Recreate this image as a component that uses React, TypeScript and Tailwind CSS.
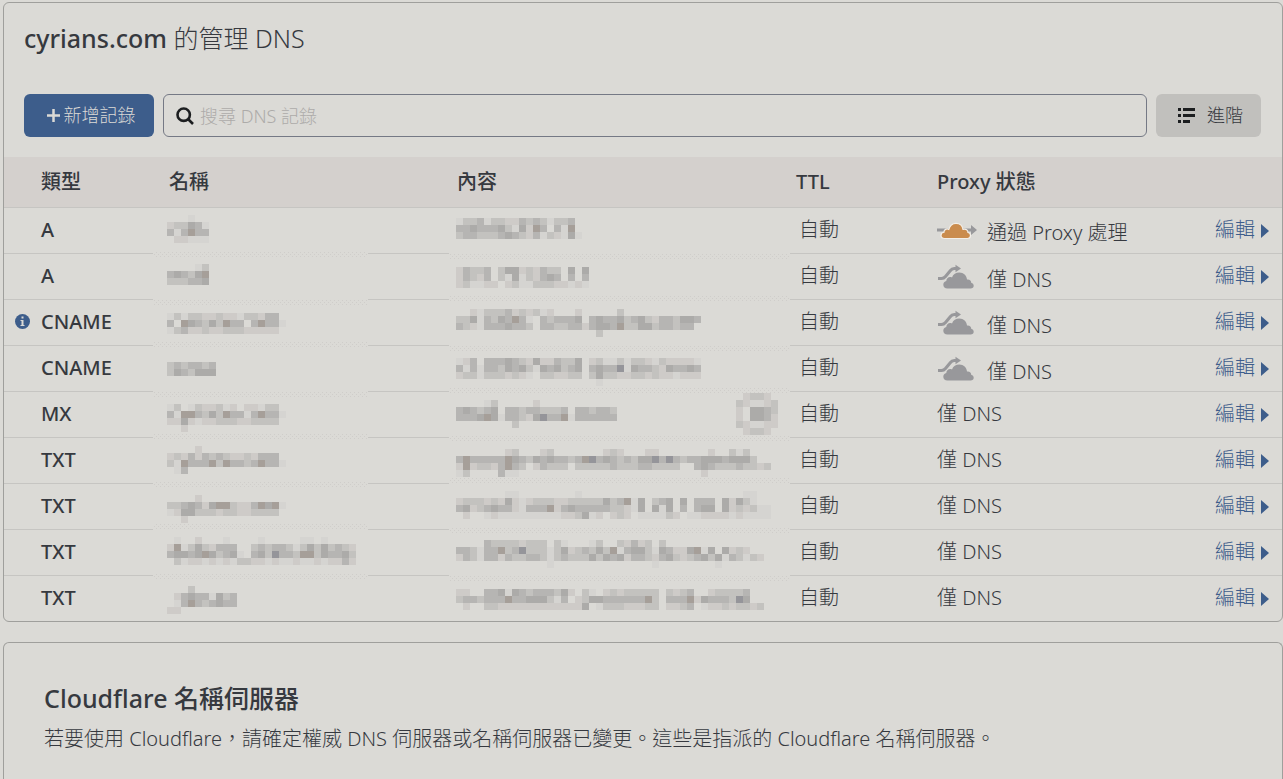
type MosaicData = { y: number; lines: string[] };

type DnsRecord = {
  type: string;
  info?: boolean;
  name: MosaicData;
  content: MosaicData;
  badge?: MosaicData;
  proxy: "on" | "off" | "none";
};

// One digit per 7px block, from the faintest shade to the darkest
const SHADES: Record<string, string> = {
  "1": "#d5d4d1",
  "2": "#cecbc8",
  "3": "#c3c2bf",
  "4": "#b6b5b3",
  "5": "#acaba9",
  "6": "#a69f99",
  "7": "#95959a",
};
const CELL = 7;

const RECORDS: DnsRecord[] = [
  {
    type: "A",
    name: { y: 7, lines: ["...1..", "233541", "414644", ".22111"] },
    content: { y: 10, lines: ["13341332243431334", "4454445315264.416", "344333454324132151"] },
    proxy: "on",
  },
  {
    type: "A",
    name: { y: 10, lines: ["....13", "454356", "333445"] },
    content: { y: 13, lines: ["24334.355232433.5.5", "24324.315132454.4.4", "231122.231133322121"] },
    proxy: "off",
  },
  {
    type: "CNAME",
    info: true,
    name: { y: 13, lines: ["1313322322133244", "4.654353644.46441", "1342232233322222"] },
    content: {
      y: 9,
      lines: [
        "..213334232312...2.....3",
        "33514354641.434445.4544534532443554",
        "43214445443.4433442455463355344344",
        "....................3",
      ],
    },
    proxy: "off",
  },
  {
    type: "CNAME",
    name: { y: 16, lines: ["3434434", "3543555"] },
    content: {
      y: 12,
      lines: [
        "124.44454325224335.2311313321322221",
        "414144354531545345.4544715443254454",
        "23313332321.332233.3533223323221222",
        "....................1",
      ],
    },
    proxy: "off",
  },
  {
    type: "MX",
    name: { y: 12, lines: ["13.1322312.22133", "41664353644146441", "2252122333223333", "..2"] },
    content: {
      y: 8,
      lines: ["....13.....2", "454345.443443334.443443", "44456514432574461444444", "........3"],
    },
    badge: { y: 1, lines: [".2332.", "321123", "2.5543", "2.5542", "321122", ".2332."] },
    proxy: "none",
  },
  {
    type: "TXT",
    name: { y: 8, lines: ["....2", "2324243432232444", "31644463644346441", ".14"] },
    content: {
      y: 11,
      lines: [
        ".......23...23.......232...22.......2..313",
        "4644444654354544346745434355747434455545553",
        "2623324643.24333.333334333443333..45433343323",
        "13....411..........................2",
      ],
    },
    proxy: "none",
  },
  {
    type: "TXT",
    name: { y: 11, lines: ["....2", "33454256632246561", "1255333233223333", "..2"] },
    content: {
      y: 7,
      lines: [
        ".......11........1.......................11",
        "233323252123332233333534615.345.5.444.52531",
        "452345442144462454444433215.515.4.455.5232311",
        ".2..12111111111223512.232.111132.112222121111",
      ],
    },
    proxy: "none",
  },
  {
    type: "TXT",
    name: {
      y: 7,
      lines: [
        ".1..2...1....1.....11.1",
        "2613532444..343443135353432",
        "45545653451.453744366354453",
        ".31221212133221211211212242",
      ],
    },
    content: {
      y: 10,
      lines: [
        "....433332333.31...13..32423.3",
        "4431446347333135234353614553154225615.5232",
        "24314424334431343335354524432453234535143132",
        ".............1..............1........1",
      ],
    },
    proxy: "none",
  },
  {
    type: "TXT",
    name: { y: 10, lines: ["...3", ".245441534", ".146434544", "22"] },
    content: {
      y: 13,
      lines: [
        "22..4451543444352.31.23233333.3234..233334",
        "3443444644555314.235544444463.444625444375",
        ".2..332222222222225.133322233.2234.122323323",
      ],
    },
    proxy: "none",
  },
];

function Mosaic({ data, x = 0 }: { data: MosaicData; x?: number }) {
  return (
    <>
      {data.lines.map((line, row) =>
        line.split("").map((c, col) =>
          SHADES[c] ? (
            <rect
              key={`${row}-${col}`}
              x={x + col * CELL}
              y={data.y + row * CELL}
              width={CELL}
              height={CELL}
              fill={SHADES[c]}
            />
          ) : null
        )
      )}
    </>
  );
}

// Speckled strip that replaces the row line under a masked value
function Speckle({ y, x, width }: { y: number; x: number; width: number }) {
  const top = y + CELL * Math.floor((45 - y) / CELL);
  return <rect x={x} y={top + 1} width={width} height={6} fill="url(#speckle)" />;
}

function ProxyOnIcon() {
  return (
    <svg width="40" height="18" viewBox="0 0 40 18" className="shrink-0" aria-hidden="true">
      <path d="M0 6.5h34V3l6 5-6 5v-3.500H0z" fill="#98989b" />
      <path
        d="M7.5 16.5c-2.300 0-3.500-1.200-3.500-3 0-2 1.300-3.200 3-3.400-.2-2.400 2.600-4 4.800-2.700C12.800 3.600 15.600 1.300 19 1.300c3.600 0 6.400 2.300 7 6 3-.8 5 .9 5 3.200 1.600.3 2.500 1.600 2.500 3 0 1.900-1.200 3-3 3z"
        fill="#ca8c4e"
        stroke="#f3efe9"
        strokeWidth="1.200"
      />
    </svg>
  );
}

function ProxyOffIcon() {
  return (
    <svg width="40" height="26" viewBox="0 0 40 26" className="shrink-0" aria-hidden="true">
      <path
        d="M1 14.500h3.500c2 0 3-.8 4-2L13 7c1.200-1.600 2.200-2.500 4.300-2.500H20"
        fill="none"
        stroke="#98989b"
        strokeWidth="3"
      />
      <path d="M18.500.8l5.500 3.700-5.500 3.700z" fill="#98989b" />
      <path
        d="M10.500 24.500c-2.600 0-4.200-1.600-4.200-3.800 0-2.100 1.300-3.500 3-3.800-.1-2.800 3-4.900 5.700-3.400 1-3.300 4-5 7.300-5 4.400 0 7.300 3 7.700 7 2.600-.4 4.300 1.100 4.200 3.300 1.500.4 2.500 1.500 2.500 3 0 1.700-1.300 2.700-3 2.700z"
        fill="#98989b"
      />
    </svg>
  );
}

function InfoIcon() {
  return (
    <svg width="15" height="15" viewBox="0 0 15 15" role="img" aria-label="資訊">
      <circle cx="7.500" cy="7.500" r="7.500" fill="#3d5d8b" />
      <path d="M6.500 2.500h2v2h-2zM5.500 6h3v5h1v1h-4v-1h1V7h-1z" fill="#dbdad6" />
    </svg>
  );
}

function RecordRow({ record, last }: { record: DnsRecord; last: boolean }) {
  const line = last ? "" : "border-b border-[#c6c5c2]";
  const height = last ? "h-[45px]" : "h-[46px]";
  return (
    <tr className={height}>
      <td className={`p-0 pb-0.5 ${line}`}>
        <div className="flex items-center gap-[11px] pl-[11px] font-medium">
          <span className="w-[15px]">{record.info && <InfoIcon />}</span>
          {record.type}
        </div>
      </td>
      <td className="p-0">
        <div className={`flex ${height}`}>
          <svg width="215" height="45" className="shrink-0 overflow-visible" aria-hidden="true">
            {!last && <Speckle y={record.name.y} x={1} width={214} />}
            <Mosaic data={record.name} x={14} />
          </svg>
          <div className={`flex-1 ${line}`} />
        </div>
      </td>
      <td className="p-0 align-top">
        <svg width="341" height="45" className="overflow-visible" aria-hidden="true">
          {!last && <Speckle y={record.content.y} x={1} width={340} />}
          <Mosaic data={record.content} x={7} />
          {record.badge && <Mosaic data={record.badge} x={287} />}
        </svg>
      </td>
      <td className={`p-0 pb-0.5 pl-[9px] ${line}`}>自動</td>
      <td className={`p-0 ${record.proxy === "none" ? "pb-0.5" : ""} ${line}`}>
        {record.proxy === "on" && (
          <div className="flex items-center gap-2.5">
            <ProxyOnIcon />
            <span className="pt-1">通過 Proxy 處理</span>
          </div>
        )}
        {record.proxy === "off" && (
          <div className="flex items-center gap-2.5">
            <ProxyOffIcon />
            <span className="pt-1.5">僅 DNS</span>
          </div>
        )}
        {record.proxy === "none" && "僅 DNS"}
      </td>
      <td className={`p-0 ${line}`}>
        <button type="button" className="flex items-center gap-1.5 text-[#3d5d8b]">
          <span className="pb-0.5">編輯</span>
          <svg width="8" height="14" viewBox="0 0 8 14" aria-hidden="true">
            <path d="M0 0l8 7-8 7z" fill="#3d5d8b" />
          </svg>
        </button>
      </td>
    </tr>
  );
}

export default function App() {
  return (
    <div
      lang="zh-Hant"
      className="flex min-h-screen flex-col bg-[#dbdad6] pt-0.5 pl-[3px] font-['Noto_Sans','Noto_Sans_CJK_TC',sans-serif] text-[20px] leading-7 font-light text-[#36393f]"
    >
      <svg width="0" height="0" className="absolute" aria-hidden="true">
        <pattern id="speckle" width="4" height="4" patternUnits="userSpaceOnUse">
          <path d="M3 0h1v1h-1zM1 2h1v1h-1z" fill="#cfcdca" />
        </pattern>
      </svg>

      <section className="rounded-md border border-[#9f9f9c]">
        <div className="pt-[17px] pr-[21px] pb-5 pl-5">
          <h1 className="text-[25px] leading-9">
            <span className="font-medium">cyrians.com</span> 的管理 DNS
          </h1>

          <div className="mt-[38px] flex gap-[9px] text-lg">
            <button
              type="button"
              className="flex h-[43px] w-[130px] items-center justify-center gap-1 rounded-md bg-[#3d5d8b] pb-0.5 pl-1 text-[#dbdad6]"
            >
              <svg width="13" height="13" viewBox="0 0 13 13" className="mt-0.5" aria-hidden="true">
                <path d="M6.500 0v13M0 6.500h13" stroke="#dbdad6" strokeWidth="2.500" />
              </svg>
              新增記錄
            </button>
            <label className="flex h-[43px] flex-1 items-center gap-1.5 rounded-md border border-[#757985] px-3">
              <svg width="18" height="18" viewBox="0 0 18 18" className="shrink-0" aria-hidden="true">
                <path
                  d="M7.700 1.500a6.200 6.200 0 1 0 0 12.400 6.200 6.200 0 0 0 0-12.400zM12 12l5 5"
                  fill="none"
                  stroke="#1c1e20"
                  strokeWidth="2.600"
                />
              </svg>
              <input
                type="text"
                aria-label="搜尋 DNS 記錄"
                placeholder="搜尋 DNS 記錄"
                className="w-full bg-transparent outline-none placeholder:text-[#adaba9]"
              />
            </label>
            <button
              type="button"
              className="flex h-[43px] w-[105px] items-center justify-center gap-3 rounded-md bg-[#c1c0bd] pb-0.5 pl-1"
            >
              <svg width="17" height="15" viewBox="0 0 17 15" className="mt-0.5" aria-hidden="true">
                <path
                  d="M0 0h3v3H0zM5 0h12v3H5zM0 6h3v3H0zM5 6h12v3H5zM0 12h3v3H0zM5 12h7v3H5z"
                  fill="#1c1e20"
                />
              </svg>
              進階
            </button>
          </div>
        </div>

        <table className="w-full table-fixed border-separate border-spacing-0 text-left">
          <colgroup>
            <col className="w-[149px]" />
            <col className="w-[296px]" />
            <col className="w-[341px]" />
            <col className="w-[147px]" />
            <col />
            <col className="w-[67px]" />
          </colgroup>
          <thead>
            <tr className="h-[51px] bg-[#d4d0cd] *:border-b *:border-[#c6c5c2] *:p-0 *:font-medium">
              <th>
                <span className="pl-[37px]">類型</span>
              </th>
              <th>
                <span className="pl-4">名稱</span>
              </th>
              <th>
                <span className="pl-2">內容</span>
              </th>
              <th>
                <span className="pl-1.5">TTL</span>
              </th>
              <th>Proxy 狀態</th>
              <th aria-label="編輯" />
            </tr>
          </thead>
          <tbody>
            {RECORDS.map((record, i) => (
              <RecordRow key={i} record={record} last={i === RECORDS.length - 1} />
            ))}
          </tbody>
        </table>
      </section>

      <section className="mt-5 flex-1 rounded-t-md border border-b-0 border-[#9f9f9c] px-10 pt-[37px] pb-6">
        <h2 className="text-[25px] leading-9 font-medium">Cloudflare 名稱伺服器</h2>
        <p className="mt-[9px]">
          若要使用 Cloudflare，請確定權威 DNS 伺服器或名稱伺服器已變更。這些是指派的 Cloudflare 名稱伺服器。
        </p>
      </section>
    </div>
  );
}
